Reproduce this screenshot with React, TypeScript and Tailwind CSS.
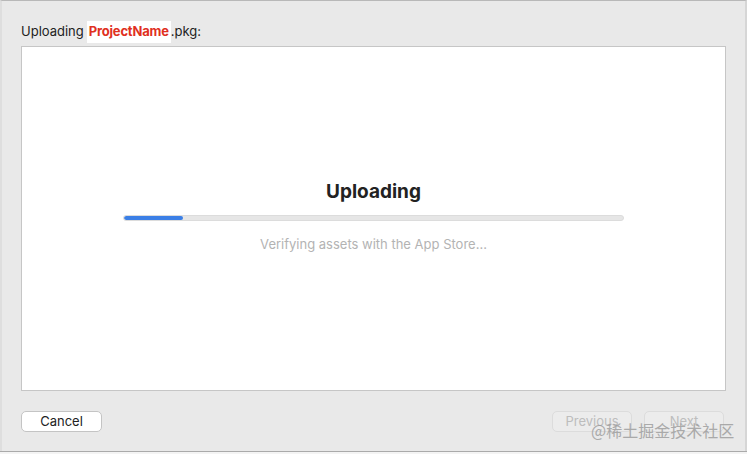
export default function App() {
  const font = { fontFamily: '"Inter", "Liberation Sans", "Noto Sans CJK SC", sans-serif' };
  return (
    <div className="w-[747px] h-[454px] bg-[#ececec] overflow-hidden relative flex flex-col" style={font}>
      <div className="flex-1 flex flex-col border-t border-[#b8b8b8] border-l-[2px] border-l-[#dedede] border-r-[2px] border-r-[#d6d6d6] bg-[#e9e9e9]">
        <div className="flex items-center pl-[19px] pt-[17px] h-[45px] text-[13px] text-[#222]">
          <span>Uploading</span>
          <span className="ml-[3px] bg-white px-[2px] py-[1px] font-bold text-[#e0301e] tracking-[-0.2px]">ProjectName</span>
          <span>.pkg:</span>
        </div>
        <div className="ml-[19px] w-[705px] h-[345px] bg-white border border-[#c6c6c6] flex flex-col items-center">
          <div className="mt-[133px] text-[19px] font-bold text-[#222] leading-[24px]">Uploading</div>
          <div className="mt-[11px] w-[501px] h-[6px] rounded-full bg-[#e6e6e6] border border-[#dcdcdc] overflow-hidden">
            <div className="h-full w-[59px] bg-[#3b7fe6] rounded-full" />
          </div>
          <div className="mt-[14px] text-[13px] text-[#b3b3b3]">Verifying assets with the App Store...</div>
        </div>
        <div className="flex items-center mt-[20px] pl-[19px] pr-[21px]">
          <div className="w-[81px] h-[21px] bg-white border border-[#c4c4c4] rounded-[5px] flex items-center justify-center text-[13px] text-[#222]">Cancel</div>
          <div className="ml-auto w-[80px] h-[21px] border border-[#dcdcdc] rounded-[5px] bg-[#ececec] flex items-center justify-center text-[13px] text-[#bdbdbd]">Previous</div>
          <div className="ml-[12px] w-[80px] h-[21px] border border-[#dcdcdc] rounded-[5px] bg-[#ececec] flex items-center justify-center text-[13px] text-[#bdbdbd]">Next</div>
        </div>
      </div>
      <div className="h-[3px] bg-[#f4f4f4] border-t border-[#aaa]" />
      <div className="absolute left-[591px] top-[418px] text-[16px] text-[#9a9a9a] opacity-80" style={{ fontFamily: '"Noto Sans CJK SC", sans-serif' }}>@稀土掘金技术社区</div>
    </div>
  );
}
